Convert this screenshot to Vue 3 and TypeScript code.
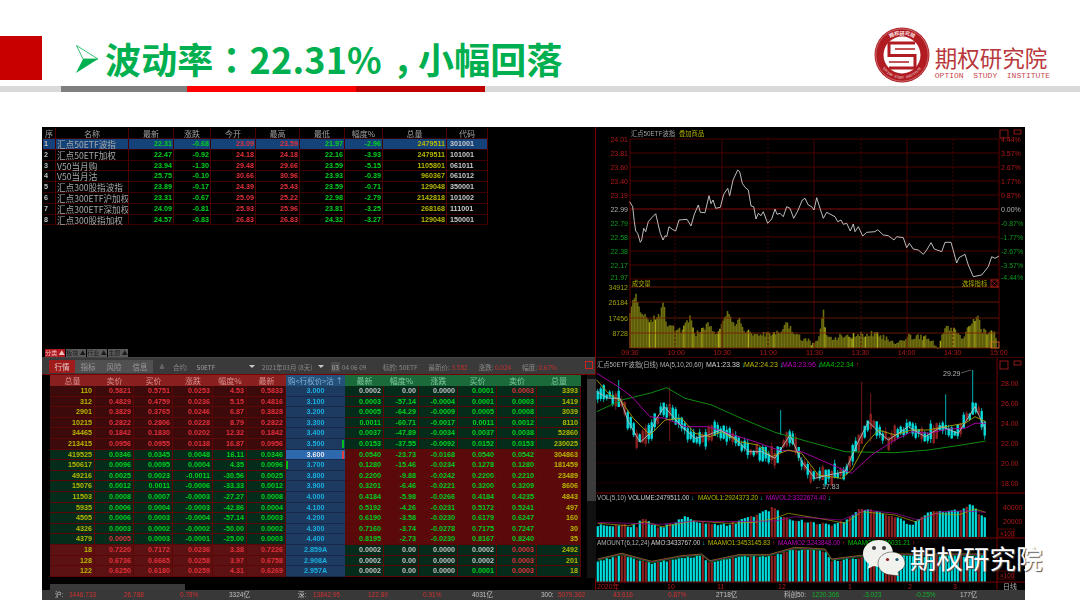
<template>
  <div class="slide">
    <header class="head">
      <div class="red-block"></div>
      <svg class="bullet" viewBox="0 0 22 28" width="22" height="28">
        <path d="M0.5 0.5 L22 14 L7 14 Z" fill="#fff" stroke="#00b050" stroke-width="0.8" />
        <path d="M0 28 L22 14 L7 14 Z" fill="#00b050" />
      </svg>
      <h1 class="title">波动率<span class="p-colon">：</span>22.31%<span class="p-comma">，</span>小幅回落</h1>
      <div class="logo">
        <svg class="seal" viewBox="0 0 56 56" width="56" height="56">
          <circle cx="28" cy="28" r="27.5" fill="#b01c22" />
          <circle cx="28" cy="28" r="26.2" fill="none" stroke="#f3d6d6" stroke-width="0.4" />
          <circle cx="28" cy="28" r="18.5" fill="#fff" />
          <defs>
            <path id="ring-top" d="M7.5 28 A20.5 20.5 0 0 1 48.5 28" />
            <path id="ring-bottom" d="M4.5 28 A23.5 23.5 0 0 0 51.5 28" />
          </defs>
          <text class="seal-cn"><textPath href="#ring-top" startOffset="50%" text-anchor="middle">期权研究院</textPath></text>
          <text class="seal-en"><textPath href="#ring-bottom" startOffset="50%" text-anchor="middle">OPTION STUDY INSTITUTE</textPath></text>
          <path d="M41 16 H15 V28.5 H41 V41 H15" fill="none" stroke="#b01c22" stroke-width="3" />
          <path d="M21 22 H41 M15 35 H35" fill="none" stroke="#b01c22" stroke-width="1.6" />
        </svg>
        <div class="logo-text">
          <div class="logo-cn">期权研究院</div>
          <div class="logo-en">OPTION&nbsp; STUDY&nbsp; INSTITUTE</div>
        </div>
      </div>
    </header>
    <div class="rule">
      <span class="seg seg-grey"></span>
      <span class="seg seg-red"></span>
      <span class="seg seg-dark"></span>
    </div>

    <section class="terminal">
      <div class="main">
        <div class="left-col">
          <div class="quote">
            <div class="q-row q-head">
              <span v-for="h in quoteHead" :key="h">{{ h }}</span>
            </div>
            <div v-for="(q, i) in quotes" :key="q.code" class="q-row" :class="{ selected: i === 0 }">
              <span class="no">{{ i + 1 }}</span>
              <span class="name">{{ q.name }}</span>
              <span class="num up">{{ q.last }}</span>
              <span class="num up">{{ q.chg }}</span>
              <span class="num dn">{{ q.open }}</span>
              <span class="num dn">{{ q.high }}</span>
              <span class="num up">{{ q.low }}</span>
              <span class="num up">{{ q.pct }}</span>
              <span class="num vol">{{ q.vol }}</span>
              <span class="code">{{ q.code }}</span>
            </div>
          </div>

          <div class="tabs">
            <span class="tab active">分类 ▲</span>
            <span class="tab">板块 ▲</span>
            <span class="tab">行业 ▲</span>
            <span class="tab">主题 ▲</span>
          </div>

          <div class="toolbar">
            <span class="tool active">行情</span>
            <div class="tool-group">
              <span class="tool">指标</span>
              <span class="tool">风险</span>
              <span class="tool">信息</span>
            </div>
            <span class="t-item t-chev">≚</span>
            <span class="t-item t-label">合约:</span>
            <span class="t-item t-fund">50ETF</span>
            <span class="t-item t-arrow"></span>
            <span class="t-item t-month">2021年03月 (8天)</span>
            <span class="t-item t-arrow t-arrow2"></span>
            <span class="t-item t-box">03</span>
            <span class="t-item t-days">04 06 09</span>
            <span class="t-item t-info">标的: 50ETF</span>
            <span class="t-item t-info">最新价: <b>3.582</b></span>
            <span class="t-item t-info">涨跌: <b>0.024</b></span>
            <span class="t-item t-info">幅度: <b>0.67%</b></span>
            <span class="t-close"></span>
          </div>

          <div class="options">
            <div class="o-table">
              <div class="o-row o-head">
                <span class="gap"></span>
                <span v-for="h in callHead" :key="'c' + h" class="hc">{{ h }}</span>
                <span class="hs">购&lt;行权价&gt;沽 ↑</span>
                <span v-for="h in putHead" :key="'p' + h" class="hp">{{ h }}</span>
              </div>
              <div v-for="(r, i) in optionRows" :key="r.strike" class="o-row">
                <span class="gap"></span>
                <span v-for="(c, j) in r.call" :key="j" class="cell" :class="[r.callClass, j === 0 ? 'vol' : c.tone]">{{ c.text }}</span>
                <span class="strike" :class="{ current: i === 6 }">
                  <i v-if="i === 7" class="tick tick-left"></i>
                  {{ r.strike }}
                  <i v-if="i === 5" class="tick tick-right green"></i>
                  <i v-if="i === 6" class="tick tick-right red"></i>
                </span>
                <span v-for="(c, j) in r.put" :key="j" class="cell" :class="[r.putClass, j === 5 ? 'vol' : c.tone]">{{ c.text }}</span>
              </div>
            </div>
            <div class="v-scroll"><div class="v-thumb"></div></div>
          </div>
          <div class="h-scroll"><div class="h-thumb"></div></div>
        </div>

        <div class="right-col">
          <svg class="chart" viewBox="596 127 429 231" width="429" height="231">
            <text x="631" y="136" class="t6" fill="#a0a0a0">汇点50ETF波指</text>
            <text x="679" y="136" class="t6" fill="#b0b000">叠加商品</text>
            <rect x="1000" y="130" width="8" height="8" fill="none" stroke="#b02020" stroke-width="0.8" />
            <rect x="1014" y="130" width="7" height="4" fill="none" stroke="#b02020" stroke-width="0.8" />
            <line v-for="y in dayLines" :key="'h' + y" x1="630" x2="999" :y1="y" :y2="y" :stroke="y === 209 ? '#a81010' : '#5c0000'" stroke-width="0.8" />
            <line v-for="b in dayBars" :key="'b' + b.x" :x1="b.x" :x2="b.x" :y1="b.y" y2="348" :stroke="b.bright ? '#a8a818' : '#6f6f10'" stroke-width="1.6" />
            <line v-for="v in dayVerticals" :key="'v' + v.x" :x1="v.x" :x2="v.x" y1="139" y2="348" stroke="#5c0000" stroke-width="0.8" :stroke-dasharray="v.dash ? '2 2' : undefined" />
            <line x1="630" x2="630" y1="139" y2="348" stroke="#7a0000" stroke-width="0.8" />
            <line x1="999" x2="999" y1="139" y2="348" stroke="#7a0000" stroke-width="0.8" />
            <line x1="596" x2="1025" y1="358" y2="358" stroke="#7a0000" />
            <line v-for="y in volLines" :key="'g' + y" x1="630" x2="999" :y1="y" :y2="y" stroke="#7c1a00" stroke-width="0.8" />
            <text v-for="l in dayLabels" :key="l.left" x="628" :y="l.y + 2.5" text-anchor="end" class="t7" :fill="l.tone">{{ l.left }}</text>
            <text v-for="l in dayLabels" :key="l.right" x="1001" :y="l.y + 2.5" class="t7" :fill="l.tone">{{ l.right }}</text>
            <polyline :points="dayLine" fill="none" stroke="#d0d0d0" stroke-width="0.9" />
            <text x="632" y="286" class="t6" fill="#b0b000">成交量</text>
            <text x="962" y="286" class="t6" fill="#b0b000">选择指标</text>
            <rect x="991" y="280" width="7" height="7" fill="none" stroke="#c02020" stroke-width="0.8" />
            <path d="M991 280 l7 7 M998 280 l-7 7" stroke="#c02020" stroke-width="0.6" />
            <rect x="991" y="342" width="8" height="6" fill="none" stroke="#d87030" stroke-width="0.8" />
            <text v-for="l in volLabels" :key="l.t" x="628" :y="l.y + 2.5" text-anchor="end" class="t7" fill="#a0a010">{{ l.t }}</text>
            <text v-for="l in timeLabels" :key="l.t" :x="l.x" y="355" text-anchor="middle" class="t7" fill="#b01818">{{ l.t }}</text>
          </svg>

          <svg class="chart" viewBox="596 358 429 232" width="429" height="232">
            <text x="597" y="367" class="t6" fill="#b0b0b0">汇点50ETF波指(日线)</text>
            <text x="660" y="367" class="t6" fill="#b0b0b0">MA(5,10,20,60)</text>
            <text x="706" y="367" class="t7" fill="#d0d0d0">MA1:23.38 <tspan fill="#00c8d8">↓</tspan></text>
            <text x="744" y="367" class="t7" fill="#b8b800">MA2:24.23 <tspan fill="#00c8d8">↓</tspan></text>
            <text x="782" y="367" class="t7" fill="#c000c0">MA3:23.96 <tspan fill="#00c8d8">↓</tspan></text>
            <text x="820" y="367" class="t7" fill="#00c000">MA4:22.34 <tspan fill="#e02020">↑</tspan></text>
            <rect x="1000" y="361" width="8" height="8" fill="none" stroke="#b02020" stroke-width="0.8" />
            <rect x="1014" y="361" width="7" height="4" fill="none" stroke="#b02020" stroke-width="0.8" />
            <line v-for="l in kLabels" :key="l.t" x1="596" x2="997" :y1="l.y" :y2="l.y" stroke="#2a0000" stroke-width="0.7" />
            <text v-for="l in kLabels" :key="'t' + l.t" x="1001" :y="l.y + 2.5" class="t7" fill="#b01818">{{ l.t }}</text>
            <g v-for="c in candles" :key="c.x">
              <line :x1="c.x" :x2="c.x" :y1="c.hi" :y2="c.lo" :stroke="c.fill" stroke-width="0.8" />
              <rect :x="c.x - 1.2" :y="c.top" width="2.4" :height="c.h" :fill="c.fill" />
            </g>
            <polyline :points="ma4" fill="none" stroke="#0e8a10" stroke-width="1" />
            <polyline :points="ma3" fill="none" stroke="#a000a0" stroke-width="1" />
            <polyline :points="ma2" fill="none" stroke="#a8a000" stroke-width="0.9" />
            <polyline :points="ma1" fill="none" stroke="#b8b8b8" stroke-width="0.9" />
            <text x="943" y="376" class="t7" fill="#b0b0b0">29.29</text>
            <path d="M961 373 L971 370" stroke="#b0b0b0" stroke-width="0.5" />
            <text x="815" y="489" class="t7" fill="#b0b0b0">←17.83</text>

            <line x1="596" x2="1025" y1="493" y2="493" stroke="#7a0000" />
            <line x1="997" x2="997" y1="358" y2="590" stroke="#7a0000" />
            <text x="597" y="500" class="t6" fill="#b0b0b0">VOL(5,10)</text>
            <text x="628" y="500" class="t6" fill="#d0d0d0">VOLUME:2479511.00 <tspan fill="#00c8d8">↓</tspan></text>
            <text x="698" y="500" class="t6" fill="#b8b800">MAVOL1:2924373.20 <tspan fill="#00c8d8">↓</tspan></text>
            <text x="766" y="500" class="t6" fill="#c000c0">MAVOL2:3322674.40 <tspan fill="#00c8d8">↓</tspan></text>
            <rect v-for="b in volBars" :key="'vb' + b.x" :x="b.x" :y="b.y" width="2.2" :height="537 - b.y" :fill="b.fill" />
            <polyline :points="volMa1" fill="none" stroke="#a8a000" stroke-width="0.7" />
            <polyline :points="volMa2" fill="none" stroke="#a000a0" stroke-width="0.7" />
            <line x1="596" x2="1025" y1="538" y2="538" stroke="#7a0000" />
            <text x="1003" y="510" class="t7" fill="#b01818">40000</text>
            <text x="1003" y="524" class="t7" fill="#b01818">20000</text>
            <rect x="998" y="529" width="16" height="8" fill="none" stroke="#7a0000" stroke-width="0.7" />
            <text x="1000" y="535.5" class="t6" fill="#b01818">×100</text>

            <text x="597" y="545" class="t6" fill="#b0b0b0">AMOUNT(6,12,24)</text>
            <text x="651" y="545" class="t6" fill="#d0d0d0">AMO:3433767.00 <tspan fill="#00c8d8">↓</tspan></text>
            <text x="708" y="545" class="t6" fill="#b8b800">MAAMO1:3453145.83 <tspan fill="#e02020">↑</tspan></text>
            <text x="778" y="545" class="t6" fill="#c000c0">MAAMO2:3243848.00 <tspan fill="#e02020">↑</tspan></text>
            <text x="848" y="545" class="t6" fill="#00c000">MAAMO3:3196031.21 <tspan fill="#e02020">↑</tspan></text>
            <rect v-for="b in amoBars" :key="'ab' + b.x" :x="b.x" :y="b.y" width="2.2" :height="582 - b.y" :fill="b.fill" />
            <polyline :points="amoMa1" fill="none" stroke="#a8a000" stroke-width="0.7" />
            <polyline :points="amoMa2" fill="none" stroke="#a000a0" stroke-width="0.7" />
            <polyline :points="amoMa3" fill="none" stroke="#0e8a10" stroke-width="0.7" />
            <line x1="596" x2="1025" y1="582" y2="582" stroke="#7a0000" />
            <rect x="998" y="571" width="16" height="8" fill="none" stroke="#7a0000" stroke-width="0.7" />
            <text x="1000" y="577.5" class="t6" fill="#b01818">×100</text>
            <text v-for="d in dateLabels" :key="d.t" :x="d.x" y="588.5" class="t7" fill="#b01818">{{ d.t }}</text>
            <text x="1003" y="588.5" class="t7" fill="#b0b0b0">日线</text>
          </svg>
        </div>
      </div>

      <footer class="status">
        <div v-for="(g, i) in market" :key="g.label" class="m-group" :class="'g' + (i + 1)">
          <span class="m-label">{{ g.label }}</span>
          <span :class="g.tone">{{ g.value }}</span>
          <span :class="g.tone">{{ g.change }}</span>
          <span :class="g.tone">{{ g.pct }}</span>
          <span class="m-amt">{{ g.amount }}</span>
        </div>
      </footer>
    </section>

    <div class="watermark">
      <svg viewBox="0 0 42 36" width="42" height="36">
        <path d="M16 0 C7 0 0 6 0 13.5 C0 18 2.5 21.5 6 24 L4.5 29 L10.5 26 C12 26.5 14 26.8 16 26.8 C25 26.8 30 20 30 13.5 C30 6 25 0 16 0 Z" fill="#f1f1ee" />
        <path d="M29 12 C21 12 15 17 15 23.5 C15 30 21 35 29 35 L36 36 L35 32 C39 30 42 27 42 23.5 C42 17 37 12 29 12 Z" fill="#f1f1ee" stroke="#222" stroke-width="0.5" />
        <circle cx="11" cy="8" r="2" fill="#3a3a3a" />
        <circle cx="21" cy="8" r="2" fill="#3a3a3a" />
        <circle cx="24.5" cy="19.5" r="1.6" fill="#8a2020" />
        <circle cx="34" cy="19.5" r="1.6" fill="#205a6a" />
      </svg>
      <span class="wm-text">期权研究院</span>
    </div>
  </div>
</template>

<script setup lang="ts">
interface Quote {
  name: string;
  last: string;
  chg: string;
  open: string;
  high: string;
  low: string;
  pct: string;
  vol: string;
  code: string;
}

interface Cell {
  text: string;
  tone: string;
}

type Pt = [number, number];

const quoteHead = ['序', '名称', '最新', '涨跌', '今开', '最高', '最低', '幅度%', '总量', '代码'];
const callHead = ['总量', '卖价', '买价', '涨跌', '幅度%', '最新'];
const putHead = ['最新', '幅度%', '涨跌', '买价', '卖价', '总量'];

const quotes: Quote[] = [
  { name: '汇点50ETF波指', last: '22.31', chg: '-0.68', open: '23.09', high: '23.59', low: '21.97', pct: '-2.96', vol: '2479511', code: '301001' },
  { name: '汇点50ETF加权', last: '22.47', chg: '-0.92', open: '24.18', high: '24.18', low: '22.16', pct: '-3.93', vol: '2479511', code: '101001' },
  { name: 'V50当月购', last: '23.94', chg: '-1.30', open: '29.48', high: '29.66', low: '23.59', pct: '-5.15', vol: '1105801', code: '061011' },
  { name: 'V50当月沽', last: '25.75', chg: '-0.10', open: '30.66', high: '30.96', low: '23.93', pct: '-0.39', vol: '960367', code: '061012' },
  { name: '汇点300股指波指', last: '23.89', chg: '-0.17', open: '24.39', high: '25.43', low: '23.59', pct: '-0.71', vol: '129048', code: '350001' },
  { name: '汇点300ETF沪加权', last: '23.31', chg: '-0.67', open: '25.09', high: '25.22', low: '22.98', pct: '-2.79', vol: '2142818', code: '101002' },
  { name: '汇点300ETF深加权', last: '24.09', chg: '-0.81', open: '25.93', high: '25.96', low: '23.81', pct: '-3.25', vol: '268168', code: '111001' },
  { name: '汇点300股指加权', last: '24.57', chg: '-0.83', open: '26.83', high: '26.83', low: '24.32', pct: '-3.27', vol: '129048', code: '150001' },
];

const strikes = ['3.000', '3.100', '3.200', '3.300', '3.400', '3.500', '3.600', '3.700', '3.800', '3.900', '4.000', '4.100', '4.200', '4.300', '4.400', '2.859A', '2.908A', '2.957A'];

const callData = [
  '110 0.5821 0.5751 0.0253 4.53 0.5833',
  '312 0.4829 0.4759 0.0236 5.15 0.4816',
  '2901 0.3829 0.3765 0.0246 6.87 0.3828',
  '10215 0.2822 0.2806 0.0228 8.79 0.2822',
  '34465 0.1842 0.1830 0.0202 12.32 0.1842',
  '213415 0.0956 0.0955 0.0138 16.87 0.0956',
  '419525 0.0346 0.0345 0.0048 16.11 0.0346',
  '150617 0.0096 0.0095 0.0004 4.35 0.0096',
  '49216 0.0025 0.0023 -0.0011 -30.56 0.0025',
  '15076 0.0012 0.0011 -0.0006 -33.33 0.0012',
  '11503 0.0008 0.0007 -0.0003 -27.27 0.0008',
  '5935 0.0006 0.0004 -0.0003 -42.86 0.0004',
  '4505 0.0006 0.0003 -0.0004 -57.14 0.0003',
  '4326 0.0003 0.0002 -0.0002 -50.00 0.0002',
  '4379 0.0005 0.0003 -0.0001 -25.00 0.0003',
  '18 0.7220 0.7172 0.0236 3.38 0.7226',
  '128 0.6736 0.6665 0.0258 3.97 0.6758',
  '122 0.6250 0.6180 0.0259 4.31 0.6269',
];

const putData = [
  '0.0002 0.00 0.0000 0.0001 0.0003 3393',
  '0.0003 -57.14 -0.0004 0.0001 0.0003 1419',
  '0.0005 -64.29 -0.0009 0.0005 0.0008 3039',
  '0.0011 -60.71 -0.0017 0.0011 0.0012 8110',
  '0.0037 -47.89 -0.0034 0.0037 0.0038 52860',
  '0.0153 -37.55 -0.0092 0.0152 0.0153 230025',
  '0.0540 -23.73 -0.0168 0.0540 0.0542 304863',
  '0.1280 -15.46 -0.0234 0.1278 0.1280 181459',
  '0.2200 -9.88 -0.0242 0.2200 0.2210 23489',
  '0.3201 -6.46 -0.0221 0.3200 0.3209 8606',
  '0.4184 -5.98 -0.0266 0.4184 0.4235 4843',
  '0.5192 -4.26 -0.0231 0.5172 0.5241 497',
  '0.6190 -3.58 -0.0230 0.6179 0.6247 160',
  '0.7160 -3.74 -0.0278 0.7175 0.7247 30',
  '0.8195 -2.73 -0.0230 0.8167 0.8240 35',
  '0.0002 0.00 0.0000 0.0002 0.0003 2492',
  '0.0002 0.00 0.0000 0.0002 0.0003 201',
  '0.0002 0.00 0.0000 0.0001 0.0003 18',
];

const callTone = (i: number, row: number): string => {
  if (row >= 6 && row < 15) return row === 14 && i === 1 ? 'dn' : 'up';
  return 'dn';
};

const putTone = (i: number, row: number): string => {
  if (row === 0 || row >= 15) {
    if (i < 3) return 'flat';
    if (i === 4) return 'dn';
    if (i === 3) return row === 17 || row === 0 ? 'up' : 'flat';
  }
  return 'up';
};

const optionRows = strikes.map((strike, row) => ({
  strike,
  callClass: row < 6 ? 'bg-red-dark' : row < 15 ? 'bg-green' : 'bg-red',
  putClass: row < 6 || row >= 15 ? 'bg-green' : 'bg-red-mid',
  call: callData[row].split(' ').map((text, i): Cell => ({ text, tone: callTone(i, row) })),
  put: putData[row].split(' ').map((text, i): Cell => ({ text, tone: putTone(i, row) })),
}));

const market = [
  { label: '沪:', value: '3446.733', change: '26.788', pct: '0.78%', amount: '3324亿', tone: 'm-red' },
  { label: '深:', value: '13842.95', change: '122.89', pct: '0.91%', amount: '4031亿', tone: 'm-red' },
  { label: '300:', value: '5079.362', change: '43.616', pct: '0.87%', amount: '2T18亿', tone: 'm-red' },
  { label: '科创50:', value: '1220.366', change: '-3.023', pct: '-0.25%', amount: '177亿', tone: 'm-green' },
];

const interp = (path: Pt[], x: number): number => {
  if (x <= path[0][0]) return path[0][1];
  for (let i = 1; i < path.length; i++) {
    if (x <= path[i][0]) {
      const [x0, y0] = path[i - 1];
      const [x1, y1] = path[i];
      return y0 + ((y1 - y0) * (x - x0)) / (x1 - x0);
    }
  }
  return path[path.length - 1][1];
};

let seed = 20210309;
const rnd = (): number => {
  seed = (seed * 1664525 + 1013904223) % 4294967296;
  return seed / 4294967296;
};

// Traced off the reference at 3x, so x/3 + origin gives page pixels
const toPoints = (path: Pt[], ox: number, oy: number): string =>
  path.map(([x, y]) => `${(x / 3 + ox).toFixed(1)},${(y / 3 + oy).toFixed(1)}`).join(' ');

const dayTrace: Pt[] = [
  [104, 230], [113, 245], [118, 290], [122, 318], [128, 325], [136, 352], [140, 345], [146, 310], [152, 320], [160, 290],
  [170, 278], [182, 266], [190, 300], [196, 325], [204, 345], [210, 332], [215, 335], [222, 305], [232, 313], [242, 318],
  [252, 285], [262, 284], [276, 283], [288, 303], [298, 268], [310, 240], [316, 262], [330, 263], [342, 212], [348, 236],
  [354, 225], [362, 250], [376, 247], [386, 208], [398, 190], [404, 212], [414, 165], [428, 135], [434, 140], [442, 175],
  [450, 187], [460, 195], [468, 243], [476, 245], [483, 282], [490, 265], [498, 272], [505, 260], [518, 295], [530, 282],
  [540, 252], [546, 268], [555, 265], [565, 275], [575, 245], [585, 250], [596, 280], [608, 258], [622, 225], [630, 220],
  [640, 240], [650, 245], [657, 255], [665, 218], [675, 250], [685, 280], [695, 262], [720, 275], [728, 290], [738, 285],
  [745, 298], [755, 295], [766, 318], [775, 297], [780, 320], [790, 305], [803, 333], [815, 322], [840, 320], [848, 314],
  [865, 330], [880, 332], [897, 345], [905, 335], [925, 338], [935, 368], [943, 355], [955, 372], [970, 375], [985, 388],
  [995, 375], [1008, 353], [1018, 372], [1040, 380], [1050, 352], [1068, 352], [1085, 414], [1092, 398], [1110, 388],
  [1120, 420], [1135, 455], [1160, 450], [1180, 425], [1190, 395], [1200, 400], [1212, 393],
];
const dayLine = toPoints(dayTrace, 595, 125);

const dayLines = Array.from({ length: 11 }, (_, i) => 139 + i * 14);
const dayVerticals = [675, 722, 768, 814, 861, 907, 953].map((x, i) => ({ x, dash: i % 2 === 0 }));
const volLines = [287, 302, 318, 333, 348];
const leftVals = ['24.01', '23.81', '23.60', '23.40', '23.19', '22.99', '22.79', '22.58', '22.38', '22.17', '21.97'];
const rightVals = ['4.44%', '3.57%', '2.67%', '1.77%', '0.87%', '0.00%', '-0.87%', '-1.77%', '-2.67%', '-3.57%', '-4.44%'];
const dayLabels = leftVals.map((left, i) => ({
  left,
  right: rightVals[i],
  y: Math.min(139 + i * 14, 277),
  tone: i < 5 ? '#b01818' : i === 5 ? '#b0b0b0' : '#0e9a20',
}));
const volLabels = [
  { t: '34912', y: 287 },
  { t: '26184', y: 302 },
  { t: '17456', y: 318 },
  { t: '8728', y: 333 },
];
const timeLabels = ['09:30', '10:00', '10:30', '11:00', '11:30', '13:30', '14:00', '14:30', '15:00'].map((t, i) => ({
  t,
  x: 630 + i * 46.1,
}));

const volEnvelope: Pt[] = [
  [105, 100], [122, 40], [130, 90], [160, 130], [195, 110], [205, 70], [215, 140], [260, 160], [285, 120], [300, 170],
  [340, 140], [360, 170], [398, 105], [420, 150], [432, 120], [450, 160], [500, 170], [550, 160], [575, 140], [620, 180],
  [660, 200], [676, 160], [685, 85], [692, 180], [800, 170], [850, 165], [890, 195], [940, 175], [1000, 180], [1030, 210],
  [1050, 150], [1080, 150], [1100, 180], [1150, 110], [1160, 155], [1200, 170], [1210, 190],
];
const dayBars = Array.from({ length: 245 }, (_, i) => {
  const zx = 105 + i * 4.5;
  const top = interp(volEnvelope, zx) + rnd() * 18;
  return { x: +(zx / 3 + 595).toFixed(1), y: +(top / 3 + 275).toFixed(1), bright: rnd() > 0.9 };
});

const ma1Path: Pt[] = [[5, 110], [40, 130], [75, 130], [100, 200], [135, 262], [165, 235], [185, 190], [208, 155], [230, 180], [260, 215], [300, 250], [340, 240], [375, 225], [420, 250], [460, 290], [500, 290], [540, 310], [585, 240], [620, 320], [660, 370], [700, 360], [750, 350], [790, 260], [820, 200], [850, 230], [880, 255], [940, 215], [990, 245], [1040, 215], [1090, 235], [1140, 155], [1172, 225]];
const ma2Path: Pt[] = [[5, 75], [40, 115], [80, 140], [115, 190], [165, 240], [210, 195], [260, 190], [300, 235], [345, 245], [380, 230], [430, 260], [490, 270], [530, 305], [580, 285], [620, 295], [670, 360], [740, 370], [770, 345], [810, 270], [850, 225], [900, 240], [950, 225], [1000, 225], [1050, 215], [1110, 205], [1140, 185], [1172, 200]];
const ma3Path: Pt[] = [[5, 55], [70, 95], [110, 125], [165, 185], [210, 190], [270, 215], [340, 215], [400, 235], [480, 260], [550, 285], [620, 290], [700, 325], [770, 355], [830, 300], [900, 255], [950, 230], [1000, 235], [1060, 222], [1110, 220], [1140, 205], [1172, 205]];
const ma4Path: Pt[] = [[5, 170], [80, 135], [170, 113], [215, 98], [270, 130], [350, 150], [450, 195], [540, 232], [640, 260], [750, 290], [900, 293], [1000, 285], [1100, 270], [1172, 258]];
const ma1 = toPoints(ma1Path, 595, 355);
const ma2 = toPoints(ma2Path, 595, 355);
const ma3 = toPoints(ma3Path, 595, 355);
const ma4 = toPoints(ma4Path, 595, 355);

const kLabels = [
  { t: '28.00', y: 383 },
  { t: '26.00', y: 403 },
  { t: '24.00', y: 423 },
  { t: '22.00', y: 443 },
  { t: '20.00', y: 463 },
  { t: '18.00', y: 483 },
];

const spikes: Record<number, [number, number]> = {
  7: [75, 135],
  24: [95, 258],
  61: [165, 240],
  88: [80, 260],
  91: [115, 260],
  116: [118, 240],
  125: [45, 170],
};

const candles = Array.from({ length: 130 }, (_, i) => {
  const zx = 8 + i * 9;
  const mid = interp(ma1Path, zx) + (rnd() - 0.5) * 24;
  const size = 12 + rnd() * 38;
  const down = rnd() > 0.3;
  const spike = spikes[i];
  const hi = spike ? spike[0] : mid - size / 2 - rnd() * 12;
  const lo = spike ? spike[1] : mid + size / 2 + rnd() * 12;
  return {
    x: +(zx / 3 + 595).toFixed(1),
    top: +((mid - size / 2) / 3 + 355).toFixed(1),
    h: +(size / 3).toFixed(1),
    hi: +(hi / 3 + 355).toFixed(1),
    lo: +(lo / 3 + 355).toFixed(1),
    fill: down ? '#00dcdc' : '#8a2222',
  };
});

const volShape: Pt[] = [[8, 115], [130, 118], [135, 92], [200, 125], [270, 90], [300, 105], [400, 115], [540, 62], [560, 95], [700, 115], [750, 105], [790, 72], [820, 68], [900, 90], [950, 115], [1010, 68], [1040, 80], [1100, 70], [1130, 55], [1172, 100]];
const volBars = Array.from({ length: 130 }, (_, i) => {
  const zx = 8 + i * 9;
  return {
    x: +(zx / 3 + 594).toFixed(1),
    y: +((interp(volShape, zx) + rnd() * 10) / 3 + 485).toFixed(1),
    fill: candles[i].fill,
  };
});
const volMa1Path: Pt[] = [[8, 115], [100, 122], [150, 110], [200, 125], [300, 108], [400, 115], [480, 112], [540, 100], [580, 85], [700, 105], [750, 115], [800, 80], [900, 90], [960, 110], [1020, 85], [1090, 90], [1140, 72], [1172, 82]];
const volMa2Path: Pt[] = [[8, 112], [200, 118], [300, 108], [400, 110], [540, 108], [600, 95], [740, 105], [810, 75], [900, 85], [970, 105], [1040, 80], [1110, 78], [1172, 82]];
const volMa1 = toPoints(volMa1Path, 595, 485);
const volMa2 = toPoints(volMa2Path, 595, 485);

const amoShape: Pt[] = [[8, 225], [80, 208], [170, 232], [260, 215], [320, 210], [345, 230], [430, 212], [520, 212], [600, 190], [690, 195], [710, 225], [830, 210], [1000, 210], [1172, 210]];
const amoBars = Array.from({ length: 130 }, (_, i) => {
  const zx = 8 + i * 9;
  return {
    x: +(zx / 3 + 594).toFixed(1),
    y: +((interp(amoShape, zx) + rnd() * 6) / 3 + 485).toFixed(1),
    fill: candles[i].fill,
  };
});
const amoMa1 = toPoints(amoShape.map(([x, y]) => [x, y - 3] as Pt), 595, 485);
const amoMa2 = toPoints(amoShape.map(([x, y]) => [x, y - 1] as Pt), 595, 485);
const amoMa3 = toPoints(amoShape.map(([x, y]) => [x, y + 1] as Pt), 595, 485);

const dateLabels = [
  { t: '2020年', x: 597 },
  { t: '10', x: 667 },
  { t: '11', x: 717 },
  { t: '12', x: 778 },
  { t: '1', x: 848 },
  { t: '2', x: 908 },
  { t: '3', x: 953 },
];
</script>

<style>
html,
body {
  margin: 0;
  background: #fff;
}
</style>

<style scoped>
.slide {
  position: relative;
  width: 1080px;
  height: 608px;
  overflow: hidden;
  background: #fff;
  font-family: "Liberation Sans", "Noto Sans CJK SC", sans-serif;
}

.head {
  display: flex;
  align-items: flex-start;
  height: 59px;
  padding-top: 27px;
  box-sizing: content-box;
}

.red-block {
  flex: none;
  width: 42px;
  height: 44px;
  margin-top: 9px;
  background: #c80000;
}

.bullet {
  flex: none;
  margin: 18px 7px 0 34px;
}

.title {
  margin: 6px 0 0;
  font: 700 36px/50px "Noto Sans CJK SC", sans-serif;
  letter-spacing: 0.15px;
  color: #00b050;
  white-space: nowrap;
}

/* colon sits centred in its box, comma low and centred, as in the reference */
.p-colon {
  font-family: "Noto Sans CJK TC", sans-serif;
}

.p-comma {
  padding: 0 0.2em 0 0.3em;
  font-feature-settings: "halt";
}

.logo {
  display: flex;
  align-items: flex-start;
  margin-left: auto;
  margin-right: 30px;
}

.seal-cn {
  font: 700 5px "Noto Sans CJK SC", sans-serif;
  fill: #fbeaea;
}

.seal-en {
  font: 3.4px "Liberation Mono", monospace;
  fill: #fbeaea;
}

.logo-text {
  margin-left: 5px;
  padding-top: 18px;
  color: #b01c22;
}

.logo-cn {
  font: 400 22.5px/25px "Noto Sans CJK SC", "Liberation Serif", serif;
  color: #b8383c;
  white-space: nowrap;
}

.logo-en {
  margin-top: 1px;
  font: 8px/9px "Liberation Mono", monospace;
  color: #c8484c;
  white-space: nowrap;
}

.rule {
  display: flex;
  height: 6px;
  padding-left: 61px;
  background: #d9d9d9;
}

.seg {
  display: block;
  height: 100%;
}

.seg-grey {
  width: 126px;
  background: #7f7f7f;
}

.seg-red {
  width: 169px;
  background: #ff0000;
}

.seg-dark {
  width: 129px;
  background: #c00000;
}

.terminal {
  display: flex;
  flex-direction: column;
  width: 983px;
  height: 473px;
  margin: 35px 0 0 42px;
  background: #000;
  filter: blur(0.3px);
}

.main {
  display: flex;
  height: 463px;
}

.left-col {
  display: flex;
  flex-direction: column;
  flex: none;
  width: 554px;
  border-right: 1px solid #7a0000;
  box-sizing: border-box;
}

.right-col {
  flex: none;
  width: 429px;
}

.chart {
  display: block;
  background: #000;
}

.t7 {
  font: 7px "Liberation Sans", "Noto Sans CJK SC", sans-serif;
}

.t6 {
  font: 6.3px "Liberation Sans", "Noto Sans CJK SC", sans-serif;
}

.quote {
  flex: none;
  height: 218px;
  padding: 1px 0 0 1px;
  box-sizing: border-box;
}

.q-row {
  display: grid;
  grid-template-columns: 13px 73px 45px 37px 45px 44px 45px 38px 64px 41px;
  width: 445px;
  height: 10.8px;
  font: 700 7.2px/10.8px "Liberation Sans", "Noto Sans CJK SC", sans-serif;
  box-shadow: inset 0 -1px 0 #3c0000;
}

.q-row > span {
  border-right: 1px solid #4c0000;
  padding: 0 1px;
  overflow: hidden;
  white-space: nowrap;
}

.q-head {
  height: 11px;
  font: 400 8px/11px "Noto Sans CJK SC", sans-serif;
  color: #a0a0a0;
  text-align: center;
}

.selected {
  background: #14437a;
}

.no {
  color: #c0c0c0;
}

.name {
  font: 400 8.6px/10.8px "Noto Sans CJK SC", sans-serif;
  color: #a8a8a8;
}

.num {
  text-align: right;
}

.up {
  color: #00d420;
}

.dn {
  color: #e8303c;
}

.flat {
  color: #c0c0c0;
}

.vol {
  color: #b8b800;
}

.code {
  color: #c8c8c8;
  padding-left: 3px !important;
}

.tabs {
  display: flex;
  flex: none;
  align-items: flex-end;
  gap: 1px;
  height: 13px;
  padding: 0 0 1px 3px;
  box-sizing: border-box;
  box-shadow: inset 0 -1px 0 #444;
}

.tab {
  height: 8px;
  width: 20px;
  background: #5a5a5a;
  color: #1a1a1a;
  font: 6px/8px "Noto Sans CJK SC", sans-serif;
  text-align: center;
  white-space: nowrap;
  overflow: hidden;
}

.tab.active {
  background: #b01820;
  color: #f0c0c0;
}

.toolbar {
  display: flex;
  flex: none;
  align-items: center;
  height: 17px;
  padding-left: 7px;
  background: #3a3a3a;
  color: #8a8a8a;
  font: 6.5px "Noto Sans CJK SC", sans-serif;
  box-shadow: inset 0 -1px 0 #7a0000;
  position: relative;
}

.tool {
  display: block;
  width: 26px;
  line-height: 13px;
  text-align: center;
  font-size: 7.5px;
  color: #9a9a9a;
}

.tool.active {
  background: #a01c1c;
  color: #e8c8c8;
}

.tool-group {
  display: flex;
  background: #505050;
}

.t-item {
  white-space: nowrap;
}

.t-chev {
  margin-left: 6px;
}

.t-label {
  margin-left: 8px;
}

.t-fund {
  margin-left: 9px;
  width: 52px;
  color: #a0a0a0;
}

.t-arrow {
  width: 0;
  height: 0;
  border: 3px solid transparent;
  border-top: 3px solid #c8c8c8;
  border-bottom: 0;
}

.t-month {
  margin-left: 7px;
  width: 56px;
}

.t-arrow2 {
  margin-right: 7px;
}

.t-box {
  width: 9px;
  background: #4c4c4c;
  color: #b0b0b0;
  text-align: center;
  line-height: 10px;
}

.t-days {
  margin: 0 12px 0 2px;
  width: 29px;
}

.t-info {
  margin-right: 11px;
}

.t-info b {
  font-weight: 400;
  color: #c83030;
}

.t-close {
  width: 6px;
  height: 6px;
  border: 1px solid #d02020;
  position: absolute;
  right: 2px;
  top: 3px;
}

.options {
  display: flex;
  flex: none;
  height: 203px;
}

.o-table {
  width: 538px;
  margin-left: 1px;
}

.o-row {
  display: grid;
  grid-template-columns: 7px 45px 39px 39px 40px 34px 39px 59px 39px 35px 39px 39px 40px 44px;
  height: 10.6px;
  font: 700 7.2px/10.6px "Liberation Sans", sans-serif;
}

.o-head {
  height: 11px;
  font: 400 8px/11px "Noto Sans CJK SC", sans-serif;
  text-align: center;
}

.hc {
  background: #8a1f1f;
  color: #d89090;
}

.hs {
  background: #24507a;
  color: #7fb0d8;
  font-size: 7.5px;
  white-space: nowrap;
  overflow: hidden;
}

.hp {
  background: #1a6a3a;
  color: #80c8a0;
}

.cell {
  padding-right: 2px;
  text-align: right;
  border-right: 1px solid #5c0606;
  box-shadow: inset 0 -1px 0 #5c0606;
}

.bg-red-dark {
  background: #3c0a0a;
}

.bg-red {
  background: #5c1212;
}

.bg-red-mid {
  background: #5a0a0a;
}

.bg-green {
  background: #052b1b;
}

.strike {
  position: relative;
  text-align: center;
  background: #1d3a60;
  color: #18b0e0;
  box-shadow: inset 0 -1px 0 #16294a;
}

.strike.current {
  background: #2f69ad;
  color: #e0e8f0;
}

.tick {
  position: absolute;
  top: 1px;
  width: 2px;
  height: 8px;
}

.tick-left {
  left: 0;
  background: #00c020;
}

.tick-right {
  right: 1px;
}

.green {
  background: #00c020;
}

.red {
  background: #e04040;
}

.v-scroll {
  flex: none;
  width: 9px;
  margin-left: 6px;
  background: #111;
}

.v-thumb {
  height: 122px;
  margin-top: 4px;
  background: #3c3c3c;
}

.h-scroll {
  flex: none;
  height: 12px;
  margin-left: 8px;
  padding-top: 6px;
  box-sizing: border-box;
  background: #000;
}

.h-thumb {
  width: 135px;
  height: 6px;
  background: #3a3a3a;
}

.status {
  display: flex;
  flex: none;
  height: 10px;
  padding-left: 13px;
  background: #383838;
  font: 6.5px/10px "Liberation Sans", "Noto Sans CJK SC", sans-serif;
}

.m-group {
  display: grid;
  flex: none;
  width: 243px;
  grid-template-columns: 14px 55px 56px 49px 1fr;
}

.g2 {
  grid-template-columns: 15px 55px 55px 49px 1fr;
}

.g3 {
  grid-template-columns: 17px 55px 55px 48px 1fr;
}

.g4 {
  grid-template-columns: 28px 51px 52px 45px 1fr;
}

.m-label,
.m-amt {
  color: #c0c0c0;
  white-space: nowrap;
}

.m-red {
  color: #d03030;
}

.m-green {
  color: #10b028;
}

.watermark {
  position: absolute;
  left: 863px;
  top: 540px;
  display: flex;
  align-items: center;
  gap: 5px;
}

.wm-text {
  font: 400 26.5px/36px "Noto Sans CJK SC", sans-serif;
  color: #fff;
  text-shadow: 1px 1px 1px #555;
  white-space: nowrap;
}
</style>
